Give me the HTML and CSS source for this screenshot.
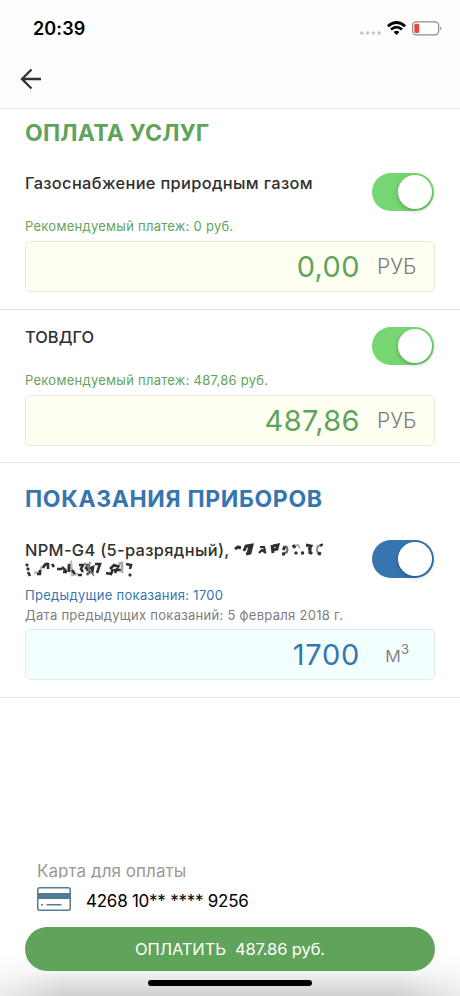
FILE: index.html
```html
<!DOCTYPE html>
<html lang="ru">
<head>
<meta charset="utf-8">
<title>Оплата услуг</title>
<link rel="stylesheet" href="styles.css">
</head>
<body>
<div class="screen">
  <header class="top">
    <div class="status">
      <span class="time">20:39</span>
      <svg class="indicators" width="84" height="20" viewBox="0 0 84 20">
        <g fill="#c4c4c6"><circle cx="3.8" cy="14" r="1.8"/><circle cx="9.6" cy="14" r="1.8"/><circle cx="15.4" cy="14" r="1.8"/><circle cx="21.2" cy="14" r="1.8"/></g>
        <g fill="none" stroke="#000" stroke-width="2.7"><path d="M29.9 7.2Q38.500-0.200 47.100 7.200"/><path d="M33 10.500Q38.500 5.900 44 10.500"/></g>
        <path d="M35.600 13Q38.500 10.700 41.400 13L38.500 16Z" fill="#000"/>
        <rect x="54.600" y="2.800" width="26" height="13" rx="3.600" fill="#fff" stroke="#8d8d8f" stroke-width="1.200"/>
        <rect x="56.300" y="4.700" width="4.900" height="9.200" rx="1.500" fill="#e8483f"/>
        <path d="M82.300 7.300Q84.300 9.300 82.300 11.300Z" fill="#777"/>
      </svg>
    </div>
    <svg class="back" width="22" height="22" viewBox="0 0 22 22" fill="none" stroke="#303030" stroke-width="2.300"><path d="M21 11H2M11.500 1.500L2 11l9.500 9.500"/></svg>
  </header>

  <section class="block block-first">
    <h1 class="title pay">ОПЛАТА УСЛУГ</h1>
    <div class="row"><p class="name gas">Газоснабжение природным газом</p><span class="toggle"></span></div>
    <p class="hint">Рекомендуемый платеж: 0 руб.</p>
    <div class="field"><span class="value">0,00</span><span class="unit">РУБ</span></div>
  </section>

  <section class="block">
    <div class="row"><p class="name tov">ТОВДГО</p><span class="toggle"></span></div>
    <p class="hint">Рекомендуемый платеж: 487,86 руб.</p>
    <div class="field"><span class="value">487,86</span><span class="unit">РУБ</span></div>
  </section>

  <section class="block block-meter">
    <h1 class="title meter">ПОКАЗАНИЯ ПРИБОРОВ</h1>
    <div class="row meter-row">
      <div class="device">
        <div class="device-line"><p class="name">NPM-G4 (5-разрядный),</p>
          <svg width="92" height="18" viewBox="0 0 92 18" fill="none" stroke="#303030" stroke-width="3">
            <path d="M1 9l3-2 3 1M10 11l2-5 6-1-2 8-4 1M16 5l-2 9"/>
            <path d="M26 7h4l1 4M25 13l3-3 4 3" stroke-width="2.200"/><path d="M38 5l1 8M39 6l5-1-1 4-4 1"/>
            <path d="M49 7q6-2 4 5l-4 2" stroke="#666" stroke-width="2"/><path d="M51 7l-2 3M48 14l3 0"/>
            <path d="M59 6l5-1 2 3" stroke="#aaa" stroke-width="2"/><path d="M59 5l2 3M61 12l2 2M67 13h3"/>
            <path d="M72 5l5 1-2 4M75 11l3 3M76 5v9"/><path d="M88 5l-4 1q-3 5 2 9" stroke="#999" stroke-width="2.400"/><path d="M87 4l1 2M84 13l3 1"/>
          </svg>
        </div>
        <svg class="mask-two" width="110" height="18" viewBox="0 0 110 18" fill="none" stroke="#303030" stroke-width="2.600">
          <path d="M1 4l2 2M2 8l2 2M3 12l2 4"/><path d="M9 13l6-1 2-6" stroke="#bbb"/><path d="M12 14h4M15 10v4M18 8q2-5 5-4v5M27 4l2 3"/>
          <path d="M32 9h5M38 12h4M37 7l5 5"/><path d="M42 10l4-7 1 12 6-1" stroke="#bbb"/><path d="M44 4v8M47 10l3 4"/>
          <path d="M54 5h4l-2 4 2 3M53 15h4M63 4l-2 4 4 3-3 4M61 10l7-3-1 7M70 4h5l-3 9"/><path d="M60 3l9 13M65 2l-2 13" stroke="#777" stroke-width="1.500"/>
          <path d="M81 13l5 1 2-5M85 9l4-4 5 2M89 10h7M94 5l-4 8"/><path d="M93 4l4-1v10" stroke="#aaa"/><path d="M101 4l5 1-1 4M104 14l2 2"/>
        </svg>
      </div>
      <span class="toggle blue"></span>
    </div>
    <p class="hint previous">Предыдущие показания: 1700</p>
    <p class="hint date">Дата предыдущих показаний: 5 февраля 2018 г.</p>
    <div class="field aqua"><span class="value">1700</span><span class="unit cubic">м<sup>3</sup></span></div>
  </section>

  <footer class="bottom">
    <div class="card-label">Карта для оплаты</div>
    <div class="card">
      <svg width="34" height="24" viewBox="0 0 34 24"><rect x=".75" y=".75" width="32.500" height="22.500" rx="2" fill="#fff" stroke="#527b99" stroke-width="1.500"/><path fill="#527b99" d="M1 6h32v6H1z"/><path d="M4 17.700h2M9.500 17.700h15" stroke="#527b99" stroke-width="1.500"/></svg>
      <span class="card-number">4268 10** **** 9256</span>
    </div>
    <div class="pay-button"><span>ОПЛАТИТЬ&nbsp; 487.86 руб.</span></div>
    <div class="home"></div>
  </footer>
</div>
</body>
</html>
```
FILE: styles.css
```css
* { box-sizing: border-box; margin: 0; padding: 0; }
body { font-family: Inter, "Liberation Sans", sans-serif; background: #fff; color: #303030; }
.screen { width: 460px; height: 996px; display: flex; flex-direction: column; overflow: hidden; }
.top { height: 109px; border-bottom: 1px solid #e3e3e5; background: #fdfdfd; }
.status { display: flex; justify-content: space-between; align-items: center; height: 57px; padding: 0 18px 0 33px; }
.time { font-size: 18px; font-weight: 600; color: #000; letter-spacing: .1px; }
.back { display: block; margin: 11px 0 0 20px; }
.block { height: 153px; padding: 17px 25px 0; border-bottom: 1px solid #e3e3e5; white-space: nowrap; }
.block-first { height: 201px; padding-top: 9px; }
.block-meter { height: 235px; padding-top: 21px; }
.title { font-size: 23px; line-height: 31px; font-weight: 750; }
.pay { color: #60a45b; margin-bottom: 24px; letter-spacing: .22px; }
.meter { color: #3775b1; margin-bottom: 25px; letter-spacing: .65px; }
.row { display: flex; justify-content: space-between; height: 44px; padding-right: 1px; }
.name { font-size: 16.4px; line-height: 21px; font-weight: 550; letter-spacing: .34px; }
.tov { letter-spacing: .05px; font-weight: 500; }
.toggle { width: 62px; height: 38px; border-radius: 19px; background: #76d672; padding: 2px; display: flex; justify-content: flex-end; }
.toggle::after { content: ""; width: 34px; height: 34px; border-radius: 50%; background: #fff; box-shadow: 0 2px 5px rgba(0,0,0,.22); }
.toggle.blue { background: #3775b1; }
.hint { color: #60a45b; font-size: 13px; line-height: 18px; letter-spacing: .26px; }
.field { height: 51px; margin-top: 6px; border: 1px solid #e5eae0; border-radius: 5px; background: #fffff2; display: flex; align-items: center; justify-content: flex-end; }
.value { color: #60a45b; font-size: 29px; margin-right: 17px; letter-spacing: .4px; }
.unit { width: 57px; color: #7d7d7d; font-size: 21px; font-weight: 300; }
.meter-row { height: 45px; }
.device-line { display: flex; gap: 4px; height: 20px; }
.mask-two { display: block; }
.previous { color: #3775b1; line-height: 20px; letter-spacing: .3px; }
.date { color: #7d7d7d; line-height: 20px; letter-spacing: .29px; }
.aqua { background: #f2ffff; border-color: #dfeceb; margin-top: 4px; }
.aqua .value { color: #3775b1; letter-spacing: .7px; }
.cubic { padding-left: 8px; }
.cubic sup { font-size: 13px; line-height: 0; font-weight: 400; }
.bottom { margin-top: auto; height: 140px; padding: 4px 25px 0; background: linear-gradient(90deg, rgba(255,255,255,.6), rgba(255,255,255,0) 14%, rgba(255,255,255,0) 86%, rgba(255,255,255,.6)), linear-gradient(#fff 68%, #f2f2f2 83%, #cfcfcf 100%); }
.card-label { height: 18px; overflow: hidden; margin-left: 12px; font-size: 17px; line-height: 22px; color: #999; letter-spacing: .05px; }
.card { display: flex; margin: 9px 0 0 12px; gap: 15px; height: 40px; }
.card-number { color: #000; font-size: 17px; line-height: 28px; letter-spacing: -.25px; }
.pay-button { height: 44px; border-radius: 22px; background: #60a45b; color: #fff; display: flex; align-items: center; justify-content: center; font-size: 16.5px; letter-spacing: -.1px; }
.home { width: 164px; height: 6px; border-radius: 3px; background: #000; margin: 9px auto 0; }
```
